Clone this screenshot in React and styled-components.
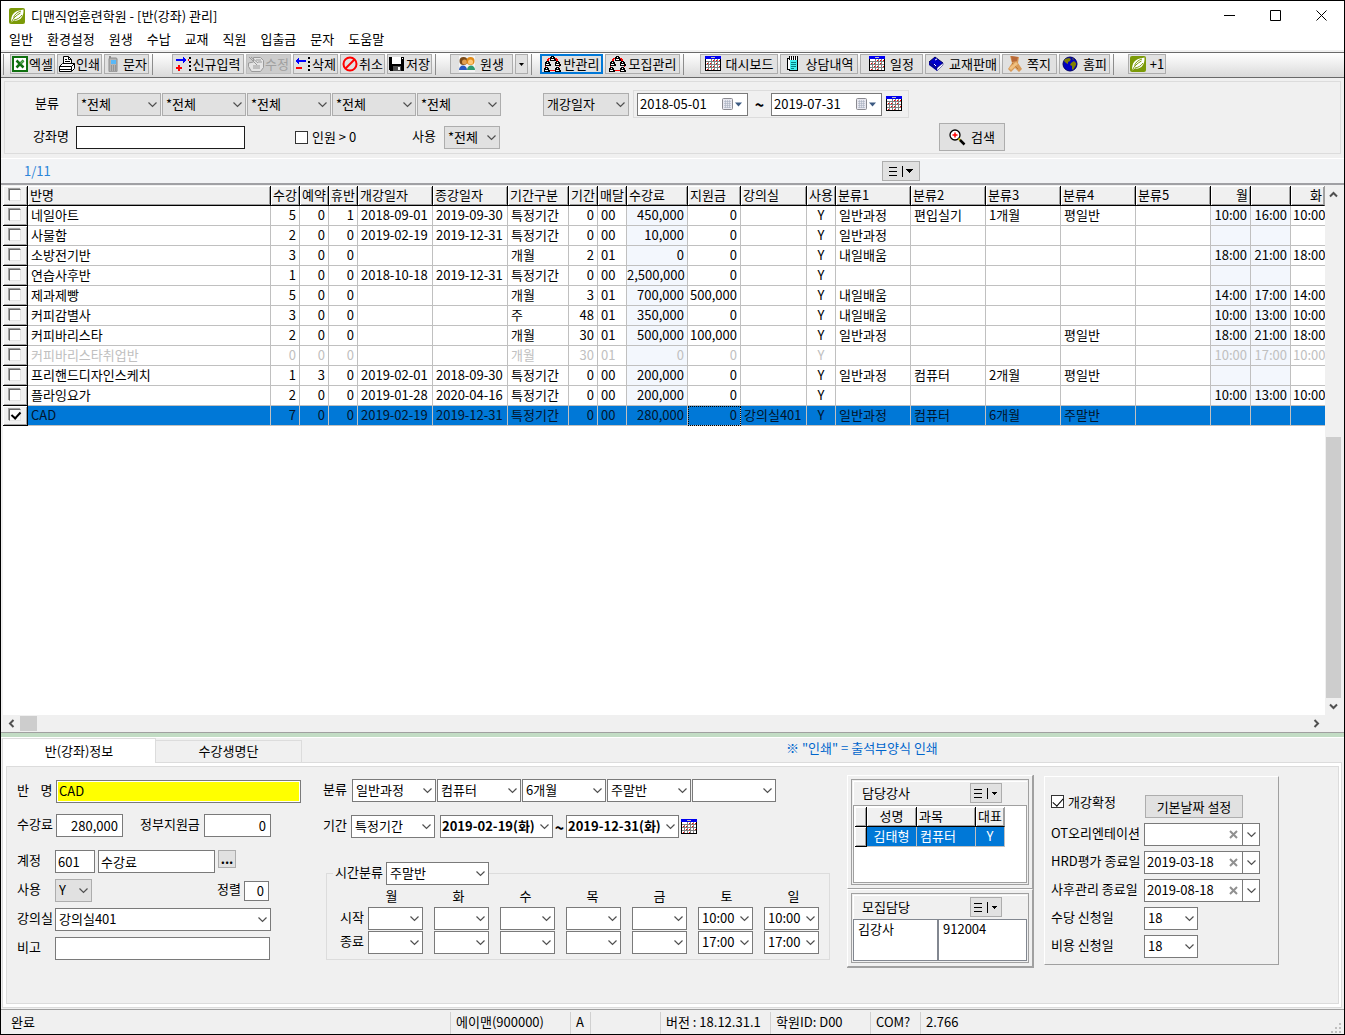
import { useState } from "react";
import styled, { createGlobalStyle, css } from "styled-components";

const GlobalStyle = createGlobalStyle`
  * {
    box-sizing: border-box;
  }
  body {
    margin: 0px;
    background: #f0f0f0;
    color: #000000;
    font-family: "Noto Sans CJK KR", "Noto Sans", sans-serif;
    font-size: 13px;
    line-height: 18px;
  }
  button, input, select {
    font: inherit;
    color: inherit;
    margin: 0px;
    border-radius: 0px;
  }
  svg {
    display: block;
    flex: none;
  }
`;

const Ventana = styled.div`
  display: flex;
  flex-direction: column;
  min-height: 100vh;
  border: 1px solid #000000;
  background: #f0f0f0;
  overflow: hidden;
  white-space: nowrap;
`;

const TitleBar = styled.header`
  display: flex;
  align-items: center;
  height: 29px;
  padding-left: 8px;
  gap: 6px;
  background: #ffffff;
  h1 {
    margin: 0px;
    flex: 1;
    font-size: 13px;
    font-weight: 400;
  }
`;

const WinButtons = styled.div`
  display: flex;
`;

const WinButton = styled.button`
  display: flex;
  align-items: center;
  justify-content: center;
  width: 46px;
  height: 28px;
  padding: 0px;
  border: none;
  background: transparent;
`;

const Menu = styled.nav`
  display: flex;
  gap: 14px;
  height: 20px;
  padding-left: 8px;
  background: #ffffff;
  a {
    color: #000000;
    text-decoration: none;
  }
`;

const Toolbar = styled.div`
  display: flex;
  height: 26px;
  margin-top: 2px;
  padding: 1px 0px 2px 2px;
  border-top: 1px solid #696969;
  border-bottom: 1px solid #696969;
  background: linear-gradient(#ffffff, #dadada);
`;

const ToolGroup = styled.div`
  display: flex;
  gap: 2px;
  margin-left: ${(props) => props.$left}px;
  padding-right: 3px;
  border-right: 1px solid ${(props) => (props.$last ? "transparent" : "#8c8c8c")};
`;

const Handle = styled.span`
  width: 1px;
  background: #8c8c8c;
`;

const Button = styled.button`
  display: flex;
  align-items: center;
  justify-content: center;
  gap: ${(props) => props.$gap ?? 5}px;
  width: ${(props) => props.$width}px;
  height: ${(props) => props.$height ?? 20}px;
  padding: 0px;
  border: 1px solid #adadad;
  background: #e1e1e1;
  white-space: nowrap;
  ${(props) =>
    props.$active &&
    css`
      border: 2px solid #0078d7;
    `}
  &:disabled {
    color: #a0a0a0;
    background: #cccccc;
    border-color: #bfbfbf;
  }
`;

const Filters = styled.form`
  display: flex;
  flex-direction: column;
  gap: 5px;
  margin: 3px 3px 4px;
  padding: 8px 0px 2px 28px;
  border: 1px solid #dcdcdc;
`;

const FilterRow = styled.div`
  display: flex;
  align-items: center;
  height: 28px;
`;

const Label = styled.label`
  flex: none;
  width: ${(props) => props.$width}px;
  margin-left: ${(props) => props.$left ?? 0}px;
  padding-bottom: 3px;
  white-space: pre;
`;

const Cluster = styled.div`
  display: flex;
  gap: ${(props) => props.$gap ?? 1}px;
  margin-left: ${(props) => props.$left ?? 0}px;
`;

const DateRange = styled.div`
  display: flex;
  align-items: center;
  height: 28px;
  margin-left: 4px;
  padding: 0px 6px 0px 3px;
  border: 1px solid #dcdcdc;
`;

const Tilde = styled.span`
  width: ${(props) => props.$width}px;
  text-align: center;
  font-size: 16px;
  font-weight: 700;
`;

const Field = styled.span`
  position: relative;
  display: block;
  flex: none;
  width: ${(props) => props.$width}px;
  height: 23px;
  svg {
    position: absolute;
    top: 8px;
    right: 4px;
    pointer-events: none;
  }
`;

const Select = styled.select`
  appearance: none;
  width: 100%;
  height: 23px;
  padding: 0px 0px 1px 3px;
  border: 1px solid ${(props) => (props.$gray ? "#adadad" : "#7a7a7a")};
  background: ${(props) => (props.$gray ? "#e1e1e1" : "#ffffff")};
  font-weight: ${(props) => (props.$bold ? 700 : 400)};
  outline: none;
  ${(props) =>
    props.$bold &&
    css`
      padding-left: 1px;
    `}
`;

const Input = styled.input`
  flex: none;
  width: ${(props) => props.$width}px;
  height: ${(props) => props.$height ?? 23}px;
  padding: 0px 4px 1px 2px;
  border: 1px solid ${(props) => (props.$dark ? "#1c1c1c" : "#7a7a7a")};
  background: ${(props) => (props.$yellow ? "#ffff00" : "#ffffff")};
  text-align: ${(props) => (props.$right ? "right" : "left")};
  outline: none;
  ${(props) =>
    props.$yellow &&
    css`
      box-shadow: inset 0px 0px 0px 1px #ffffff;
    `}
`;

const DatePicker = styled.span`
  display: flex;
  align-items: center;
  flex: none;
  width: ${(props) => props.$width}px;
  height: 23px;
  padding-right: ${(props) => (props.$split ? 0 : 5)}px;
  border: 1px solid #7a7a7a;
  background: #ffffff;
  input {
    flex: 1;
    min-width: 0px;
    padding: 0px 0px 1px 2px;
    border: none;
    background: transparent;
    outline: none;
  }
`;

const DropButton = styled.button`
  display: flex;
  align-items: center;
  justify-content: center;
  width: 17px;
  height: 21px;
  margin-left: 4px;
  padding: 0px;
  border: none;
  border-left: 1px solid #7a7a7a;
  background: #ffffff;
`;

const CheckLabel = styled.label`
  display: flex;
  align-items: center;
  align-self: ${(props) => (props.$top ? "flex-start" : "center")};
  gap: 4px;
  height: 13px;
  width: ${(props) => props.$width}px;
  margin-left: ${(props) => props.$left ?? 0}px;
`;

const Check = styled.input.attrs({ type: "checkbox" })`
  appearance: none;
  display: block;
  flex: none;
  width: 13px;
  height: 13px;
  border: 1px solid #333333;
  background: #ffffff;
  ${(props) =>
    props.$sunken &&
    css`
      margin: 0px auto;
      width: 12px;
      height: 12px;
      border-color: #696969 #e3e3e3 #e3e3e3 #696969;
      box-shadow: -1px -1px 0px #a0a0a0;
    `}
  &:checked::before {
    content: "";
    display: block;
    width: ${(props) => (props.$sunken ? 4 : 5)}px;
    height: ${(props) => (props.$sunken ? 7 : 9)}px;
    margin: 0px 0px 0px 3px;
    border: solid #000000;
    border-width: 0px ${(props) => (props.$sunken ? "2px 2px" : "1px 1px")} 0px;
    transform: rotate(42deg);
  }
`;

const InfoBar = styled.div`
  display: flex;
  align-items: center;
  height: 27px;
  padding-left: 23px;
  border-top: 1px solid #ffffff;
  border-bottom: 2px solid #a0a0a4;
  background: #f2f3f5;
  color: #2b84d8;
  span {
    width: 858px;
  }
`;

const GridArea = styled.section`
  display: grid;
  grid-template-columns: minmax(0, 1fr) 18px;
  grid-template-rows: minmax(300px, 1fr) 17px;
  flex: 1;
  padding: 1px 1px 0px 2px;
  border-bottom: 1px solid #a0a0a0;
`;

const TablePane = styled.div`
  overflow: hidden;
  background: #ffffff;
`;

const Table = styled.table`
  table-layout: fixed;
  width: ${(props) => props.$width}px;
  border-collapse: separate;
  border-spacing: 0px;
  line-height: 17px;
`;

const Th = styled.th`
  height: 20px;
  padding: 0px 2px 2px;
  overflow: hidden;
  background: #f0f0f0;
  border-right: 1px solid #000000;
  border-bottom: 1px solid #000000;
  box-shadow: inset 1px 1px 0px #ffffff, inset -1px -1px 0px #a0a0a0;
  font-weight: 400;
  text-align: ${(props) => props.$align ?? "left"};
  &:last-child {
    border-right-color: #a0a0a0;
  }
`;

const Td = styled.td`
  height: 20px;
  padding: 0px 3px 2px;
  overflow: hidden;
  border-right: 1px solid #c0c0c0;
  border-bottom: 1px solid #c0c0c0;
  background: ${(props) => (props.$tint ? "#f3f7fd" : "#ffffff")};
  text-align: ${(props) => props.$align ?? "left"};
  ${(props) =>
    props.$align === "right" &&
    css`
      padding-left: 0px;
    `}
  ${(props) =>
    props.$edge &&
    css`
      padding: 0px 0px 2px 2px;
      border-right: none;
    `}
`;

const Tr = styled.tr`
  color: ${(props) => (props.$muted ? "#c0c0c0" : "#000000")};
  ${(props) =>
    props.$selected &&
    css`
      color: ${props.$light ? "#ffffff" : "#00142b"};
      ${Td} {
        background: #0078d7;
      }
      ${Td}.focus {
        outline: 1px dotted #000000;
        outline-offset: -1px;
      }
    `}
`;

const VScroll = styled.div`
  display: flex;
  flex-direction: column;
  padding: 0px 2px 0px 1px;
  svg {
    margin: 5px auto;
  }
  i {
    flex: 234;
  }
  b {
    flex: 260;
    background: #cdcdcd;
  }
`;

const HScroll = styled.div`
  display: flex;
  align-items: center;
  svg {
    margin: 0px 4px;
  }
  i {
    flex: 1;
  }
  b {
    width: 17px;
    height: 15px;
    background: #cdcdcd;
  }
`;

const Splitter = styled.div`
  height: 5px;
  background: #c2dcc4;
  border-bottom: 1px solid #ffffff;
`;

const Tabs = styled.div`
  display: flex;
  height: 24px;
  margin-left: 1px;
`;

const Tab = styled.button`
  position: relative;
  height: ${(props) => (props.$active ? 25 : 22)}px;
  width: ${(props) => (props.$active ? 154 : 146)}px;
  margin-top: ${(props) => (props.$active ? 0 : 2)}px;
  padding: 0px 0px 1px;
  border: 1px solid #dcdcdc;
  border-bottom: none;
  border-left-width: ${(props) => (props.$active ? 1 : 0)}px;
  background: ${(props) => (props.$active ? "#ffffff" : "#f0f0f0")};
`;

const Note = styled.span`
  margin-left: 484px;
  padding-top: 1px;
  color: #0066cc;
`;

const Page = styled.div`
  margin: 0px 2px 1px 1px;
  padding: 3px 2px 3px 3px;
  border: 1px solid #dcdcdc;
  background: #ffffff;
`;

const PageInner = styled.form`
  display: flex;
  align-items: flex-start;
  min-height: 238px;
  padding: 8px 0px 34px 10px;
  border: 1px solid #dcdcdc;
  background: #f0f0f0;
`;

const Column = styled.div`
  flex: none;
  width: ${(props) => props.$width}px;
  padding-top: 4px;
`;

const Row = styled.div`
  display: flex;
  align-items: center;
  height: ${(props) => props.$height ?? 23}px;
  margin-top: ${(props) => props.$top ?? 0}px;
`;

const TimeBox = styled.fieldset`
  width: 504px;
  margin: 24px 0px 0px 3px;
  padding: 2px 0px 5px 13px;
  border: 1px solid #dcdcdc;
  min-width: 0px;
  legend {
    display: flex;
    align-items: center;
    height: 23px;
    margin-left: -7px;
    padding: 0px 0px 0px 2px;
  }
`;

const Days = styled.div`
  display: flex;
  height: 19px;
  padding-left: 18px;
  span {
    width: 67px;
    text-align: center;
  }
`;

const Panels = styled.div`
  flex: none;
  width: 187px;
  border-right: 1px solid #a0a0a0;
  border-bottom: 1px solid #a0a0a0;
`;

const Raised = styled.section`
  flex: none;
  width: ${(props) => props.$width};
  margin-left: ${(props) => props.$left ?? 0}px;
  margin-top: ${(props) => props.$top ?? 0}px;
  padding: ${(props) => props.$pad ?? "3px"};
  border: 1px solid;
  border-color: #ffffff #a0a0a0 #a0a0a0 #ffffff;
`;

const Frame = styled.div`
  padding: 1px;
  border: 1px solid #a0a0a0;
`;

const PanelHead = styled.div`
  display: flex;
  align-items: center;
  justify-content: space-between;
  height: 24px;
  padding: 0px 25px 0px 9px;
  box-shadow: inset 1px 1px 0px #ffffff;
  h2 {
    margin: 0px;
    font-size: 13px;
    font-weight: 400;
  }
`;

const TeacherList = styled.div`
  height: 78px;
  padding: 1px;
  border: 1px solid #a0a0a0;
  background: #ffffff;
`;

const ListPair = styled.div`
  display: grid;
  grid-template-columns: 85px 1fr;
  div {
    height: 42px;
    padding-left: 4px;
    border: 1px solid #828790;
    background: #ffffff;
  }
`;

const Stack = styled.div`
  display: flex;
  flex-direction: column;
  gap: 5px;
`;

const StatusBar = styled.footer`
  display: flex;
  height: 25px;
  padding: 2px 2px 0px 0px;
  border-top: 1px solid #a0a0a0;
  svg {
    margin: 11px 0px 0px auto;
  }
`;

const StatusCell = styled.span`
  width: ${(props) => props.$width}px;
  padding: 1px 0px 0px ${(props) => props.$pad ?? 5}px;
  border-right: 1px solid ${(props) => (props.$last ? "transparent" : "#d0d0d0")};
`;

// icons

function Leaf() {
  return (
    <svg width="16" height="16" viewBox="0 0 16 16">
      <rect width="16" height="16" rx="2" fill="#7b9a08" />
      <path d="M2 15C2 7 4 3 14.5 1.500C15 9 11 13.500 4.500 12.500Z" fill="#ffffff" />
      <path d="M2 15C4 10 7 7.500 11.500 5M4.500 9.500C6 6 8 4.500 12 3M5 12C8 11.500 11 10 13 7" fill="none" stroke="#7b9a08" strokeWidth="1" />
    </svg>
  );
}

function Chevron({ dir = "down", bold }) {
  const turn = { down: 0, up: 180, left: 90, right: 270 }[dir];
  return (
    <svg width="9" height="7" viewBox="0 0 9 7" overflow="visible">
      <path
        d={bold ? "M1 1.500L4.500 5L8 1.500" : "M.5 1.500L4.500 5.500L8.500 1.500"}
        transform={`rotate(${turn} 4.500 3.500)`}
        fill="none"
        stroke="#505050"
        strokeWidth={bold ? 2 : 1.2}
      />
    </svg>
  );
}

function Calendar() {
  return (
    <svg width="16" height="16" viewBox="0 0 16 16" shapeRendering="crispEdges">
      <path d="M0 0h16v15H0z" fill="#000000" />
      <path d="M1 3h14v11H1z" fill="#808080" />
      <path d="M0 0h16v3H0z" fill="#0000f0" />
      <path d="M6 1h4v1H6z" fill="#c0c0c0" />
      <path
        d="M1 3h5v2H1zM7 3h2v2H7zM10 3h2v2h-2zM13 3h2v2h-2zM1 6h2v2H1zM4 6h2v2H4zM7 6h2v2H7zM10 6h2v2h-2zM13 6h2v2h-2zM1 9h2v2H1zM4 9h2v2H4zM7 9h2v2H7zM10 9h2v2h-2zM13 9h2v2h-2zM1 12h2v2H1zM4 12h2v2H4zM7 12h2v2H7zM10 12h2v2h-2zM13 12h2v2h-2z"
        fill="#ffffff"
      />
      <path
        d="M8 4h1v1H8zM11 4h1v1h-1zM14 4h1v1h-1zM2 7h1v1H2zM5 7h1v1H5zM11 7h1v1h-1zM5 10h1v1H5zM8 10h1v1H8zM14 10h1v1h-1zM2 13h1v1H2zM8 13h1v1H8z"
        fill="#ff0000"
      />
    </svg>
  );
}

function Excel() {
  return (
    <svg width="16" height="16" viewBox="0 0 16 16">
      <rect x="1" y="1" width="14" height="14" fill="#ffffff" stroke="#107010" strokeWidth="2" />
      <path d="M4.500 4.500l7 7M11.500 4.500l-7 7" stroke="#107010" strokeWidth="2.500" />
      <path d="M11.500 4.500l-3 3" stroke="#60b060" strokeWidth="1.500" />
    </svg>
  );
}

function Printer() {
  return (
    <svg width="16" height="16" viewBox="0 0 16 16">
      <path d="M4.500 8V.5h5l3 3V8" fill="#ffffff" stroke="#000000" />
      <path d="M6 3.500h2M6 5.500h5M9.500.5v3h3" stroke="#000000" fill="none" />
      <path d="M.5 10.500l3-3h12v5l-3 3H.5z" fill="#ffffff" stroke="#000000" />
      <path d="M.5 10.500h12v5M12.500 10.500l3-3M1 13.500h11" stroke="#000000" fill="none" />
    </svg>
  );
}

function Phone() {
  return (
    <svg width="14" height="16" viewBox="0 0 14 16">
      <rect x="3" y="0" width="2" height="4" fill="#909090" />
      <rect x="3" y="2" width="8" height="14" rx="1" fill="#b4b4b4" stroke="#8a8a8a" />
      <rect x="5" y="4" width="5" height="4" fill="#58b8f8" />
      <path d="M5 10h5M5 12h5M5 14h5" stroke="#777777" strokeDasharray="1 1" />
    </svg>
  );
}

function RowEdit({ minus }) {
  return (
    <svg width="16" height="16" viewBox="0 0 16 16" shapeRendering="crispEdges">
      {minus ? (
        <path d="M4 2v2h7v2H4v2H3V7H2V6H1V4h1V3h1V2z" fill="#0000ff" />
      ) : (
        <path d="M7 1v2H0v2h7v2h1V6h1V5h1V3H9V2H8V1z" fill="#0000ff" />
      )}
      <path d={minus ? "M1 11h6v2H1z" : "M2 9h2v2h2v2H4v2H2v-2H0v-2h2z"} fill="#ff0000" />
      <path d="M13 1h2v2h-2zM13 5h2v2h-2zM13 9h2v2h-2zM13 13h2v2h-2z" fill="#000000" />
      {!minus && <path d="M12 3h1v2h-1z" fill="#ff0000" />}
    </svg>
  );
}

function EditGray() {
  return (
    <svg width="16" height="16" viewBox="0 0 16 16">
      <path d="M5.500 1.500h7l3 3v7l-3 4h-9l-3-5V7l5-1z" fill="#e4e4e4" stroke="#9a9a9a" />
      <path d="M1 1l8 8M3 1l7 6M5 10h7M5 12h7M8 4h5M10 6h4" stroke="#9a9a9a" />
    </svg>
  );
}

function Cancel() {
  return (
    <svg width="16" height="16" viewBox="0 0 16 16">
      <circle cx="8" cy="8" r="6.500" fill="none" stroke="#ff0000" strokeWidth="2" />
      <path d="M3.500 12.500l9-9" stroke="#ff0000" strokeWidth="2" />
    </svg>
  );
}

function Save() {
  return (
    <svg width="16" height="16" viewBox="0 0 16 16" shapeRendering="crispEdges">
      <path d="M0 1h15v14H1l-1-1z" fill="#000000" />
      <path d="M3 1h9v7H3z" fill="#ffffff" />
      <path d="M4 10h8v5H4z" fill="#505050" />
      <path d="M9 11h2v3H9z" fill="#ffffff" />
      <path d="M13 2h1v1h-1z" fill="#ffffff" />
    </svg>
  );
}

function People() {
  return (
    <svg width="16" height="16" viewBox="0 0 16 16">
      <rect width="16" height="16" fill="#f4f4f4" />
      <circle cx="4.500" cy="5" r="4" fill="#7a4a18" />
      <circle cx="5.500" cy="6" r="2.500" fill="#e2a050" />
      <circle cx="11.500" cy="5" r="4" fill="#e08a18" />
      <circle cx="11.500" cy="6" r="2.500" fill="#ffc878" />
      <path d="M0 14c0-6 8-6 8 0z" fill="#2858c0" />
      <path d="M8 14c0-6 8-6 8 0z" fill="#2f9a70" />
    </svg>
  );
}

// one seated figure, 5px wide
function Seat({ x, y }) {
  return (
    <g transform={`translate(${x} ${y})`}>
      <path d="M1 0h3v1h1v2h1v2H0V3h0V1h1z" fill="#000000" />
      <path d="M2 1h1v1H2zM1 3h3v1H1z" fill="#ffffff" />
    </g>
  );
}

function Seats() {
  return (
    <svg width="17" height="16" viewBox="0 0 17 16" shapeRendering="crispEdges">
      <path d="M4 2h2v1H4zM3 3h2v2H3zM11 2h2v1h-2zM12 3h2v2h-2zM1 10h1v1H1zM15 10h1v1h-1zM6 14h5v1H6z" fill="#ff0000" />
      <Seat x="6" y="0" />
      <Seat x="1" y="5" />
      <Seat x="11" y="5" />
      <Seat x="0" y="11" />
      <Seat x="11" y="11" />
    </svg>
  );
}

function Notepad() {
  return (
    <svg width="16" height="16" viewBox="0 0 16 16" shapeRendering="crispEdges">
      <path d="M2 2h11v13H4v-1H2z" fill="#000000" />
      <path d="M3 3h9v10H3z" fill="#ffffff" />
      <path d="M5 4h7v10H5z" fill="#40f0f0" />
      <path d="M6 6h5v1H6zM6 8h5v1H6zM6 10h5v1H6zM6 12h3v1H6z" fill="#008080" />
      <path d="M4 0h1v4H4zM6 0h1v4H6zM8 0h1v4H8zM10 0h1v4h-1zM12 0h1v4h-1z" fill="#000000" />
      <path d="M5 1h1v2H5zM7 1h1v2H7zM9 1h1v2H9zM11 1h1v2h-1z" fill="#ffffff" />
    </svg>
  );
}

function Book() {
  return (
    <svg width="16" height="16" viewBox="0 0 16 16">
      <path d="M1 6l6-5 8 6-6 5z" fill="#0000c8" stroke="#000060" />
      <path d="M1 6v3l8 6v-3z" fill="#0000a0" />
      <path d="M9 12l6-5v2l-6 6z" fill="#ffffff" stroke="#000080" strokeWidth=".5" />
      <path d="M7 4l2-1M6 8l2 2" stroke="#ffffff" />
    </svg>
  );
}

function Memo() {
  return (
    <svg width="14" height="16" viewBox="0 0 14 16">
      <path d="M2 0l9 1-1 6 4 6-3 3-4-4-4 4-3-3 4-6z" fill="#d89a58" />
      <path d="M3 0l7 1-1 4-5 1z" fill="#b86838" />
      <path d="M4 7l6 6" stroke="#b87838" />
      <path d="M1 12l7-6 2 2-7 6z" fill="#f0c080" />
    </svg>
  );
}

function Globe() {
  return (
    <svg width="16" height="16" viewBox="0 0 16 16">
      <circle cx="8" cy="8" r="7" fill="#0000c0" stroke="#000060" />
      <path d="M3 3l4-1 2 1-1 2-2 1v2l-2-1-2-2zM9 7l3-2 2 2v2l-3 5-1-1V10L8 9zM10 2l2 1-1 1z" fill="#808000" />
    </svg>
  );
}

function Magnifier() {
  return (
    <svg width="17" height="17" viewBox="0 0 17 17">
      <circle cx="6" cy="6" r="5" fill="#ffffff" stroke="#000000" strokeWidth="1.3" />
      <path d="M6 3.500v5M3.500 6h5" stroke="#ff0000" strokeWidth="1.500" />
      <path d="M9.500 9.500l2 2" stroke="#c8b400" strokeWidth="2" />
      <path d="M11 11l4.500 4.500" stroke="#000000" strokeWidth="2.500" />
    </svg>
  );
}

function ListIcon({ small }) {
  return (
    <svg width="26" height="12" viewBox="0 0 26 12" shapeRendering="crispEdges">
      <path d="M1 2.500h8M1 6.500h8M1 10.500h8M14.500 1v11" stroke="#000000" />
      <path d={small ? "M19 5h5l-2.500 3z" : "M18 4h7l-3.500 4z"} fill="#000000" />
    </svg>
  );
}

function DateDrop() {
  return (
    <svg width="20" height="13" viewBox="0 0 20 13">
      <rect x=".5" y=".5" width="10" height="11" rx="1" fill="#e8e8f0" stroke="#8a8a90" />
      <path d="M2 3.500h7M2 5.500h7M2 7.500h7M2 9.500h7M3.500 2v8M5.500 2v8M7.500 2v8" stroke="#a8b0c0" strokeWidth=".6" />
      <path d="M13 4.500h7l-3.500 4z" fill="#3c5a82" />
    </svg>
  );
}

function Cross() {
  return (
    <svg width="9" height="9" viewBox="0 0 9 9">
      <path d="M1 1l7 7M8 1l-7 7" stroke="#909090" strokeWidth="2" />
    </svg>
  );
}

function Combo({ id, label, value, width, gray, bold }) {
  return (
    <Field $width={width}>
      <Select id={id} aria-label={id ? undefined : label} defaultValue={value} $gray={gray} $bold={bold}>
        <option>{value}</option>
      </Select>
      <Chevron />
    </Field>
  );
}

const menu = ["일반", "환경설정", "원생", "수납", "교재", "직원", "입출금", "문자", "도움말"];

const columns = [
  { name: "반명", w: 243 },
  { name: "수강", w: 29, align: "right" },
  { name: "예약", w: 29, align: "right" },
  { name: "휴반", w: 29, align: "right" },
  { name: "개강일자", w: 75 },
  { name: "종강일자", w: 75 },
  { name: "기간구분", w: 61 },
  { name: "기간", w: 29, align: "right" },
  { name: "매달", w: 29 },
  { name: "수강료", w: 61, align: "right", head: "left", tint: true },
  { name: "지원금", w: 53, align: "right", head: "left" },
  { name: "강의실", w: 66 },
  { name: "사용", w: 29, align: "center" },
  { name: "분류1", w: 75 },
  { name: "분류2", w: 75 },
  { name: "분류3", w: 75 },
  { name: "분류4", w: 75 },
  { name: "분류5", w: 75 },
  { name: "월", w: 40, align: "right", tint: true },
  { name: "", w: 40, align: "right", tint: true },
  { name: "화", w: 34, head: "right", edge: true },
];

const courses = [
  ["네일아트", 5, 0, 1, "2018-09-01", "2019-09-30", "특정기간", 0, "00", "450,000", "0", "", "Y", "일반과정", "편입실기", "1개월", "평일반", "", "10:00", "16:00", "10:00"],
  ["사물함", 2, 0, 0, "2019-02-19", "2019-12-31", "특정기간", 0, "00", "10,000", "0", "", "Y", "일반과정", "", "", "", "", "", "", ""],
  ["소방전기반", 3, 0, 0, "", "", "개월", 2, "01", "0", "0", "", "Y", "내일배움", "", "", "", "", "18:00", "21:00", "18:00"],
  ["연습사후반", 1, 0, 0, "2018-10-18", "2019-12-31", "특정기간", 0, "00", "2,500,000", "0", "", "Y", "", "", "", "", "", "", "", ""],
  ["제과제빵", 5, 0, 0, "", "", "개월", 3, "01", "700,000", "500,000", "", "Y", "내일배움", "", "", "", "", "14:00", "17:00", "14:00"],
  ["커피감별사", 3, 0, 0, "", "", "주", 48, "01", "350,000", "0", "", "Y", "내일배움", "", "", "", "", "10:00", "13:00", "10:00"],
  ["커피바리스타", 2, 0, 0, "", "", "개월", 30, "01", "500,000", "100,000", "", "Y", "일반과정", "", "", "평일반", "", "18:00", "21:00", "18:00"],
  ["커피바리스타취업반", 0, 0, 0, "", "", "개월", 30, "01", "0", "0", "", "Y", "", "", "", "", "", "10:00", "17:00", "10:00"],
  ["프리핸드디자인스케치", 1, 3, 0, "2019-02-01", "2018-09-30", "특정기간", 0, "00", "200,000", "0", "", "Y", "일반과정", "컴퓨터", "2개월", "평일반", "", "", "", ""],
  ["플라잉요가", 2, 0, 0, "2019-01-28", "2020-04-16", "특정기간", 0, "00", "200,000", "0", "", "Y", "", "", "", "", "", "10:00", "13:00", "10:00"],
  ["CAD", 7, 0, 0, "2019-02-19", "2019-12-31", "특정기간", 0, "00", "280,000", "0", "강의실401", "Y", "일반과정", "컴퓨터", "6개월", "주말반", "", "", "", ""],
];

const days = ["월", "화", "수", "목", "금", "토", "일"];
const times = [
  { name: "시작", values: ["", "", "", "", "", "10:00", "10:00"] },
  { name: "종료", values: ["", "", "", "", "", "17:00", "17:00"] },
];

const endDates = [
  { name: "OT오리엔테이션", value: "" },
  { name: "HRD평가 종료일", value: "2019-03-18" },
  { name: "사후관리 종료일", value: "2019-08-18" },
];

function CourseTable() {
  const [checked, setChecked] = useState({ CAD: true });
  const toggle = (name) => setChecked({ ...checked, [name]: !checked[name] });
  const total = columns.reduce((sum, c) => sum + c.w, 25);
  return (
    <Table $width={total}>
      <colgroup>
        <col width="25" />
        {columns.map((c, i) => (
          <col key={i} width={c.w} />
        ))}
      </colgroup>
      <thead>
        <tr>
          <Th>
            <Check $sunken aria-label="전체 선택" />
          </Th>
          {columns.map((c, i) => (
            <Th key={i} $align={c.head ?? c.align}>
              {c.name}
            </Th>
          ))}
        </tr>
      </thead>
      <tbody>
        {courses.map((row) => (
          <Tr key={row[0]} $muted={row[1] === 0} $selected={row[0] === "CAD"}>
            <Th>
              <Check
                $sunken
                aria-label={row[0]}
                checked={!!checked[row[0]]}
                onChange={() => toggle(row[0])}
              />
            </Th>
            {row.map((cell, i) => (
              <Td
                key={i}
                $align={columns[i].align}
                $tint={columns[i].tint}
                $edge={columns[i].edge}
                className={i === 10 ? "focus" : undefined}
              >
                {cell}
              </Td>
            ))}
          </Tr>
        ))}
      </tbody>
    </Table>
  );
}

function MainToolbar() {
  return (
    <Toolbar>
      <Handle />
      <ToolGroup $left={6}>
        <Button $width={45} $gap={1}><Excel />엑셀</Button>
        <Button $width={45} $gap={1}><Printer />인쇄</Button>
        <Button $width={45} $gap={3}><Phone />문자</Button>
      </ToolGroup>
      <ToolGroup $left={19}>
        <Button $width={72} $gap={1}><RowEdit />신규입력</Button>
        <Button $width={45} $gap={1} disabled><EditGray />수정</Button>
        <Button $width={45} $gap={1}><RowEdit minus />삭제</Button>
        <Button $width={45} $gap={1}><Cancel />취소</Button>
        <Button $width={45} $gap={1}><Save />저장</Button>
      </ToolGroup>
      <ToolGroup $left={14}>
        <Button $width={63}><People />원생</Button>
        <Button $width={13} aria-label="원생 메뉴">
          <svg width="5" height="3" viewBox="0 0 5 3"><path d="M0 0h5L2.500 3z" /></svg>
        </Button>
      </ToolGroup>
      <ToolGroup $left={8}>
        <Button $width={63} $gap={3} $active><Seats />반관리</Button>
        <Button $width={75} $gap={3}><Seats />모집관리</Button>
      </ToolGroup>
      <ToolGroup $left={16}>
        <Button $width={78}><Calendar />대시보드</Button>
        <Button $width={78}><Notepad />상담내역</Button>
        <Button $width={63}><Calendar />일정</Button>
        <Button $width={75}><Book />교재판매</Button>
        <Button $width={55}><Memo />쪽지</Button>
        <Button $width={51}><Globe />홈피</Button>
      </ToolGroup>
      <ToolGroup $left={14} $last>
        <Button $width={38} $gap={4}><Leaf />+1</Button>
      </ToolGroup>
    </Toolbar>
  );
}

function FilterPanel() {
  return (
    <Filters>
      <FilterRow>
        <Label htmlFor="cat1" $width={42} $left={2}>분류</Label>
        <Cluster>
          <Combo id="cat1" value="*전체" width={84} gray />
          {[2, 3, 4, 5].map((n) => (
            <Combo key={n} label={`분류${n}`} value="*전체" width={84} gray />
          ))}
        </Cluster>
        <Cluster $left={42}>
          <Combo label="일자 구분" value="개강일자" width={86} gray />
        </Cluster>
        <DateRange>
          <DatePicker $width={111}>
            <input aria-label="시작일" defaultValue="2018-05-01" />
            <DateDrop />
          </DatePicker>
          <Tilde $width={23}>~</Tilde>
          <DatePicker $width={111}>
            <input aria-label="종료일" defaultValue="2019-07-31" />
            <DateDrop />
          </DatePicker>
          <Cluster $left={4}>
            <Calendar />
          </Cluster>
        </DateRange>
      </FilterRow>
      <FilterRow>
        <Label htmlFor="course" $width={43}>강좌명</Label>
        <Input id="course" $width={169} $dark />
        <CheckLabel $width={117} $left={50}>
          <Check />
          인원 &gt; 0
        </CheckLabel>
        <Label htmlFor="use" $width={32}>사용</Label>
        <Combo id="use" value="*전체" width={56} gray />
        <Cluster $left={439}>
          <Button type="button" $width={66} $height={28}><Magnifier />검색</Button>
        </Cluster>
      </FilterRow>
    </Filters>
  );
}

function CourseForm() {
  return (
    <Column $width={306}>
      <Row $height={24}>
        <Label htmlFor="name" $width={39}>{"반    명"}</Label>
        <Input id="name" $width={245} $yellow defaultValue="CAD" />
      </Row>
      <Row $top={11}>
        <Label htmlFor="fee" $width={39}>수강료</Label>
        <Input id="fee" $width={67} $right defaultValue="280,000" />
        <Label htmlFor="support" $width={64} $left={17}>정부지원금</Label>
        <Input id="support" $width={67} $right defaultValue="0" />
      </Row>
      <Row $top={13}>
        <Label htmlFor="account" $width={38}>계정</Label>
        <Cluster $gap={3}>
          <Input id="account" $width={40} defaultValue="601" />
          <Input aria-label="계정명" $width={117} defaultValue="수강료" />
          <Button type="button" $width={18} $height={18}>
            <b>...</b>
          </Button>
        </Cluster>
      </Row>
      <Row $top={6}>
        <Label htmlFor="active" $width={38}>사용</Label>
        <Combo id="active" value="Y" width={37} gray />
        <Label htmlFor="order" $width={27} $left={125}>정렬</Label>
        <Input id="order" $width={25} $height={20} $right defaultValue="0" />
      </Row>
      <Row $top={6}>
        <Label htmlFor="room" $width={38}>강의실</Label>
        <Combo id="room" value="강의실401" width={216} />
      </Row>
      <Row $top={6}>
        <Label htmlFor="memo" $width={38}>비고</Label>
        <Input id="memo" $width={215} />
      </Row>
    </Column>
  );
}

function ScheduleForm() {
  return (
    <Column $width={524}>
      <Row>
        <Label htmlFor="kind" $width={29}>분류</Label>
        <Cluster>
          <Combo id="kind" value="일반과정" width={84} />
          <Combo label="분류2" value="컴퓨터" width={84} />
          <Combo label="분류3" value="6개월" width={84} />
          <Combo label="분류4" value="주말반" width={84} />
          <Combo label="분류5" value="" width={84} />
        </Cluster>
      </Row>
      <Row $top={13}>
        <Label htmlFor="term" $width={28}>기간</Label>
        <Combo id="term" value="특정기간" width={84} />
        <Cluster $left={5}>
          <Combo label="개강일" value="2019-02-19(화)" width={113} bold />
        </Cluster>
        <Tilde $width={13}>~</Tilde>
        <Combo label="종강일" value="2019-12-31(화)" width={113} bold />
        <Cluster $left={2}>
          <Calendar />
        </Cluster>
      </Row>
      <TimeBox>
        <legend>
          <Label htmlFor="timeKind" $width={51}>시간분류</Label>
          <Combo id="timeKind" value="주말반" width={103} />
        </legend>
        <Days>
          {days.map((d) => (
            <span key={d}>{d}</span>
          ))}
        </Days>
        {times.map((t) => (
          <Row key={t.name} $height={24}>
            <Label htmlFor={t.name} $width={28}>{t.name}</Label>
            <Cluster $gap={11}>
              {t.values.map((v, i) => (
                <Combo key={i} id={i === 0 ? t.name : undefined} label={days[i] + t.name} value={v} width={55} />
              ))}
            </Cluster>
          </Row>
        ))}
      </TimeBox>
    </Column>
  );
}

function StaffPanels() {
  return (
    <Panels>
      <Raised>
        <Frame>
          <PanelHead>
            <h2>담당강사</h2>
            <Button type="button" $width={32} $height={20} aria-label="담당강사 메뉴"><ListIcon small /></Button>
          </PanelHead>
          <TeacherList>
            <Table $width={150}>
              <colgroup>
                <col width="12" />
                <col width="50" />
                <col width="59" />
                <col width="29" />
              </colgroup>
              <thead>
                <tr>
                  <Th />
                  <Th $align="center">성명</Th>
                  <Th>과목</Th>
                  <Th $align="center">대표</Th>
                </tr>
              </thead>
              <tbody>
                <Tr $selected $light>
                  <Th />
                  <Td $align="center">김태형</Td>
                  <Td>컴퓨터</Td>
                  <Td $align="center">Y</Td>
                </Tr>
              </tbody>
            </Table>
          </TeacherList>
        </Frame>
      </Raised>
      <Raised>
        <Frame>
          <PanelHead>
            <h2>모집담당</h2>
            <Button type="button" $width={32} $height={20} aria-label="모집담당 메뉴"><ListIcon small /></Button>
          </PanelHead>
          <ListPair>
            <div>김강사</div>
            <div>912004</div>
          </ListPair>
        </Frame>
      </Raised>
    </Panels>
  );
}

function DatesPanel() {
  return (
    <Raised $width="235px" $left={10} $top={1} $pad="18px 0px 6px 6px">
      <Stack>
        <Row>
          <CheckLabel $width={94} $top>
            <Check defaultChecked />
            개강확정
          </CheckLabel>
          <Button type="button" $width={98} $height={23}>기본날짜 설정</Button>
        </Row>
        {endDates.map((d) => (
          <Row key={d.name}>
            <Label htmlFor={d.name} $width={93}>{d.name}</Label>
            <DatePicker $width={116} $split>
              <input id={d.name} defaultValue={d.value} />
              <Cross />
              <DropButton type="button" aria-label={`${d.name} 선택`}><Chevron /></DropButton>
            </DatePicker>
          </Row>
        ))}
        {["수당 신청일", "비용 신청일"].map((name) => (
          <Row key={name}>
            <Label htmlFor={name} $width={93}>{name}</Label>
            <Combo id={name} value="18" width={54} />
          </Row>
        ))}
      </Stack>
    </Raised>
  );
}

export default function App() {
  return (
    <Ventana>
      <GlobalStyle />
      <TitleBar>
        <Leaf />
        <h1>디맨직업훈련학원 - [반(강좌) 관리]</h1>
        <WinButtons>
          <WinButton aria-label="최소화">
            <svg width="11" height="11"><path d="M0 5.500h11" stroke="#000000" /></svg>
          </WinButton>
          <WinButton aria-label="최대화">
            <svg width="11" height="11"><path d="M.5.5h10v10H.5z" fill="none" stroke="#000000" /></svg>
          </WinButton>
          <WinButton aria-label="닫기">
            <svg width="11" height="11"><path d="M.5.5l10 10M10.500.5l-10 10" stroke="#000000" /></svg>
          </WinButton>
        </WinButtons>
      </TitleBar>
      <Menu>
        {menu.map((m) => (
          <a href="#" key={m}>{m}</a>
        ))}
      </Menu>
      <MainToolbar />
      <FilterPanel />
      <InfoBar>
        <span>1/11</span>
        <Button $width={38} aria-label="목록 메뉴"><ListIcon /></Button>
      </InfoBar>
      <GridArea>
        <TablePane>
          <CourseTable />
        </TablePane>
        <VScroll>
          <Chevron dir="up" bold />
          <i />
          <b />
          <Chevron bold />
        </VScroll>
        <HScroll>
          <Chevron dir="left" bold />
          <b />
          <i />
          <Chevron dir="right" bold />
        </HScroll>
      </GridArea>
      <Splitter />
      <Tabs role="tablist">
        <Tab role="tab" aria-selected="true" $active>반(강좌)정보</Tab>
        <Tab role="tab" aria-selected="false">수강생명단</Tab>
        <Note>※ "인쇄" = 출석부양식 인쇄</Note>
      </Tabs>
      <Page>
        <PageInner>
          <CourseForm />
          <ScheduleForm />
          <StaffPanels />
          <DatesPanel />
        </PageInner>
      </Page>
      <StatusBar>
        <StatusCell $width={450} $pad={10}>완료</StatusCell>
        <StatusCell $width={120}>에이맨(900000)</StatusCell>
        <StatusCell $width={20}>A</StatusCell>
        <StatusCell $width={70} />
        <StatusCell $width={110}>버전 : 18.12.31.1</StatusCell>
        <StatusCell $width={100}>학원ID: D00</StatusCell>
        <StatusCell $width={50}>COM?</StatusCell>
        <StatusCell $width={60} $last>2.766</StatusCell>
        <svg width="11" height="11" fill="#bfbfbf">
          <path d="M8 0h2v2H8zM4 4h2v2H4zM8 4h2v2H8zM0 8h2v2H0zM4 8h2v2H4zM8 8h2v2H8z" />
        </svg>
      </StatusBar>
    </Ventana>
  );
}
